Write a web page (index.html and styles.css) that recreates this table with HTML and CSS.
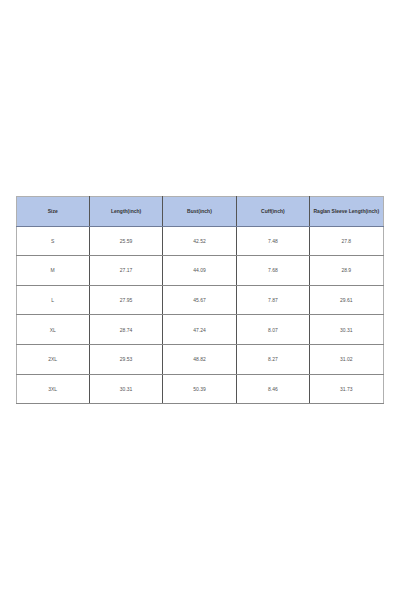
FILE: index.html
```html
<!DOCTYPE html>
<html>
<head>
<meta charset="utf-8">
<link rel="stylesheet" href="styles.css">
</head>
<body>
<div class="page">
<table class="sizes">
<thead>
<tr><th>Size</th><th>Length(inch)</th><th>Bust(inch)</th><th>Cuff(inch)</th><th>Raglan Sleeve Length(inch)</th></tr>
</thead>
<tbody>
<tr><td>S</td><td>25.59</td><td>42.52</td><td>7.48</td><td>27.8</td></tr>
<tr><td>M</td><td>27.17</td><td>44.09</td><td>7.68</td><td>28.9</td></tr>
<tr><td>L</td><td>27.95</td><td>45.67</td><td>7.87</td><td>29.61</td></tr>
<tr><td>XL</td><td>28.74</td><td>47.24</td><td>8.07</td><td>30.31</td></tr>
<tr><td>2XL</td><td>29.53</td><td>48.82</td><td>8.27</td><td>31.02</td></tr>
<tr><td>3XL</td><td>30.31</td><td>50.39</td><td>8.46</td><td>31.73</td></tr>
</tbody>
</table>
</div>
</body>
</html>
```
FILE: styles.css
```css
html, body {
  margin: 0;
  padding: 0;
  background: #fff;
}
.page {
  width: 400px;
  height: 600px;
  box-sizing: border-box;
  padding: 196px 0 0 15.5px;
}
.sizes {
  width: 368px;
  border-collapse: collapse;
  table-layout: fixed;
  font-family: "Liberation Sans", Arial, sans-serif;
  font-size: 5px;
  color: #555;
  border: 1px solid #b0b0b0;
}
.sizes th, .sizes td {
  height: 29.6px;
  padding: 0;
  text-align: center;
  vertical-align: middle;
  border-left: 1px solid #555;
  border-right: 1px solid #555;
  border-bottom: 1px solid #888;
  box-sizing: border-box;
}
.sizes th:first-child, .sizes td:first-child { border-left: 1px solid #b0b0b0; }
.sizes th:last-child, .sizes td:last-child { border-right: 1px solid #b0b0b0; }
.sizes th {
  background: #b4c6e8;
  color: #333;
  font-weight: bold;
  border-bottom: 1px solid #6f7c99;
  border-top: 1px solid #b0b0b0;
}
.sizes tbody tr:last-child td { border-bottom: 1px solid #888; }
```
